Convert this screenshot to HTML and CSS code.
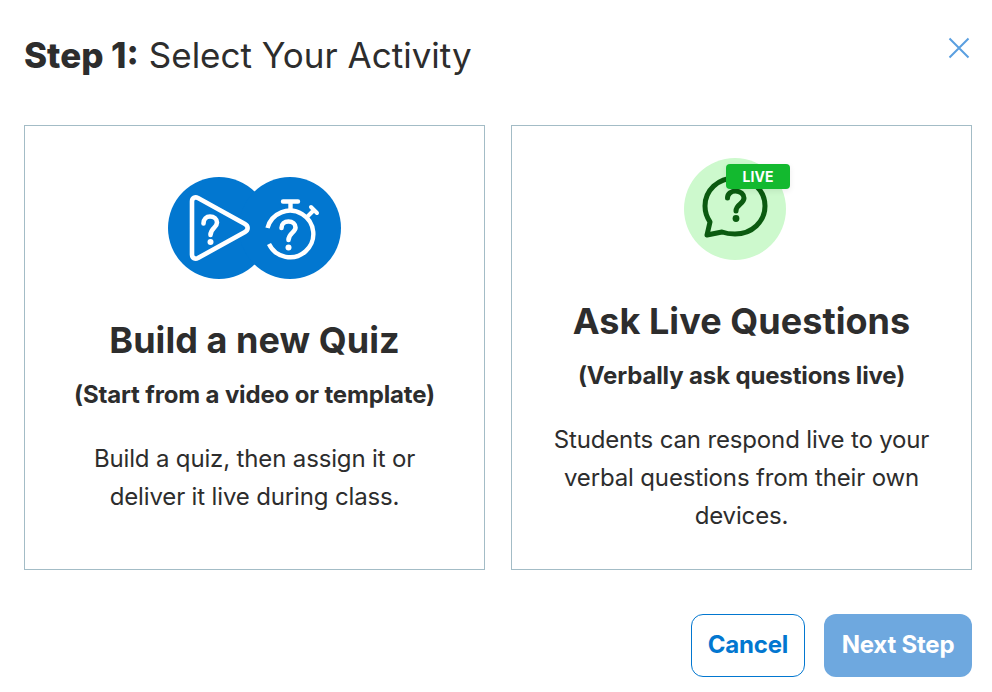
FILE: index.html
```html
<!DOCTYPE html>
<html lang="en">
<head>
<meta charset="utf-8">
<title>Select Your Activity</title>
<link rel="stylesheet" href="styles.css">
</head>
<body>
<main class="dialog">
  <header class="head">
    <h1 class="title"><strong>Step 1:</strong> Select Your Activity</h1>
    <button class="close" aria-label="Close">
      <svg width="22" height="22" viewBox="0 0 22 22"><path d="M1.5 1.5 20.5 20.5M20.5 1.5 1.5 20.5" stroke="#5a9fe0" stroke-width="2" fill="none"/></svg>
    </button>
  </header>
  <section class="cards">
    <article class="card">
      <svg class="icon-quiz" width="173" height="102" viewBox="0 0 173 102">
        <circle cx="51" cy="51" r="51" fill="#0277d0"/>
        <circle cx="122" cy="51" r="51" fill="#0277d0"/>
        <path d="M24 24.500C24 21 27 19.500 30 21L77 47C80.500 49 80.500 53 77 55L30 81C27 82.500 24 81 24 77.500Z" fill="none" stroke="#fff" stroke-width="4.600" stroke-linejoin="round"/>
        <path d="M35.500 46.500C35.500 42 38.500 39.500 42 39.500C46 39.500 49 42 49 45.500C49 51 42.500 51 42.500 58" fill="none" stroke="#fff" stroke-width="4.600" stroke-linecap="round"/>
        <circle cx="42.500" cy="65" r="3" fill="#fff"/>
        <path d="M115 24.500H130M122.500 25V32" fill="none" stroke="#fff" stroke-width="4.400" stroke-linecap="round"/>
        <path d="M99.500 51A23.300 23.300 0 1 1 101 67" fill="none" stroke="#fff" stroke-width="4.400"/>
        <path d="M140 39 146 33M143 30 149 36" fill="none" stroke="#fff" stroke-width="4" stroke-linecap="round"/>
        <path d="M113.500 51C113.500 47 116.500 44.500 120.500 44.500C124.500 44.500 127.500 47 127.500 50.500C127.500 55.500 120.500 56 120.500 63" fill="none" stroke="#fff" stroke-width="4.600" stroke-linecap="round"/>
        <circle cx="120.500" cy="70.500" r="3" fill="#fff"/>
      </svg>
      <h2 class="card-title">Build a new Quiz</h2>
      <p class="card-sub">(Start from a video or template)</p>
      <p class="card-text">Build a quiz, then assign it or<br>deliver it live during class.</p>
    </article>
    <article class="card">
      <div class="icon-live">
        <svg width="102" height="102" viewBox="0 0 102 102">
          <circle cx="51" cy="51" r="51" fill="#cdf9cd"/>
          <path d="M51 20C34 20 21 32.500 21 48C21 54.500 23 59.500 26 64L23 77L38 74C42 75.500 46.500 76 51 76C68 76 81 63.500 81 48C81 32.500 68 20 51 20Z" fill="none" stroke="#0b5a10" stroke-width="5" stroke-linejoin="round"/>
          <path d="M43.500 40C43.500 36 47 33 51.500 33C56.500 33 60 36.500 60 40C60 46 52 46 52 53" fill="none" stroke="#0b5a10" stroke-width="5" stroke-linecap="round"/>
          <circle cx="52" cy="60.500" r="3.400" fill="#0b5a10"/>
        </svg>
        <span class="badge">LIVE</span>
      </div>
      <h2 class="card-title">Ask Live Questions</h2>
      <p class="card-sub">(Verbally ask questions live)</p>
      <p class="card-text">Students can respond live to your<br>verbal questions from their own<br>devices.</p>
    </article>
  </section>
  <footer class="actions">
    <button class="btn btn-cancel">Cancel</button>
    <button class="btn btn-next">Next Step</button>
  </footer>
</main>
</body>
</html>
```

FILE: styles.css
```css
* { box-sizing: border-box; }
html, body { margin: 0; padding: 0; background: #fff; }
body { font-family: Inter, "Open Sans", sans-serif; color: #2d2d2d; }
.dialog { width: 992px; height: 692px; padding: 33px 20px 15px 24px; display: flex; flex-direction: column; }
.head { display: flex; justify-content: space-between; align-items: flex-start; height: 92px; }
.title { margin: 0; font-size: 35px; line-height: 44px; font-weight: 400; }
.title strong { font-weight: 800; }
.close { border: 0; background: none; padding: 0; margin: 4px 2px 0 0; width: 22px; height: 22px; }
.close svg { display: block; }
.cards { display: flex; gap: 26px; }
.card { width: 461px; height: 445px; border: 1px solid #a3bcc6; display: flex; flex-direction: column; align-items: center; justify-content: center; text-align: center; padding-bottom: 3px; }
.icon-quiz { display: block; }
.icon-live { position: relative; width: 102px; height: 102px; margin-right: 13px; }
.icon-live svg { display: block; }
.badge { position: absolute; left: 42px; top: 6px; width: 64px; height: 25px; border-radius: 4px; background: #13b92f; color: #fff; font-size: 14px; font-weight: 700; line-height: 25px; text-align: center; box-shadow: 0 2px 6px rgba(0,0,0,.08); }
.card-title { margin: 39px 0 0; font-size: 36px; line-height: 44px; font-weight: 700; letter-spacing: 0.05px; }
.card-sub { margin: 18px 0 0; font-size: 24px; line-height: 30px; font-weight: 700; letter-spacing: -0.15px; }
.card-text { margin: 30px 0 0; font-size: 24px; line-height: 38px; font-weight: 400; letter-spacing: -0.15px; }
.actions { display: flex; justify-content: flex-end; gap: 19px; margin-top: 44px; }
.btn { height: 63px; border-radius: 12px; font-family: inherit; font-size: 24px; font-weight: 700; padding: 0 0 3px; letter-spacing: -0.2px; }
.btn-cancel { width: 114px; background: #fff; border: 1px solid #0277d0; color: #0277d0; }
.btn-next { width: 148px; background: #6ea8df; border: 0; color: #fff; }
```
